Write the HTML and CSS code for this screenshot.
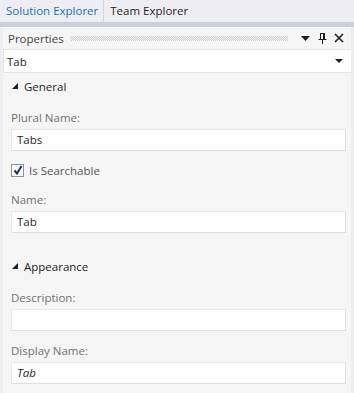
FILE: index.html
```html
<!DOCTYPE html>
<html>
<head>
    <meta charset="utf-8">
    <title>Properties</title>
    <link rel="stylesheet" href="styles.css">
</head>
<body>
    <div class="tabs">
        <div class="tab active">Solution Explorer</div>
        <div class="tab">Team Explorer</div>
    </div>
    <div class="band"></div>
    <div class="panel">
        <div class="header">
            <span class="title">Properties</span>
            <span class="grip"></span>
            <span class="tool">
                <svg width="9" height="5" viewBox="0 0 9 5"><path d="M0 0h9L4.5 5z" fill="#1e1e1e"/></svg>
            </span>
            <span class="tool">
                <svg width="9" height="11" viewBox="0 0 9 11"><path d="M2 0.5h5M2.5 0.5v6M6.5 0.5v6M5.5 0.5v6M0.5 6.5h8M4.5 6.5v4.5" stroke="#1e1e1e" fill="none"/></svg>
            </span>
            <span class="tool">
                <svg width="10" height="10" viewBox="0 0 10 10"><path d="M1 1l8 8M9 1l-8 8" stroke="#1e1e1e" stroke-width="1.6" fill="none"/></svg>
            </span>
        </div>
        <div class="combo">
            <span>Tab</span>
            <svg width="8" height="4" viewBox="0 0 8 4"><path d="M0 0h8L4 4z" fill="#1e1e1e"/></svg>
        </div>
        <div class="content">
            <div class="section">
                <svg class="caret" width="6" height="6" viewBox="0 0 6 6"><path d="M6 0v6H0z" fill="#1e1e1e"/></svg>
                <span>General</span>
            </div>
            <div class="label first">Plural Name:</div>
            <div class="input">Tabs</div>
            <label class="check">
                <span class="box">
                    <svg width="10" height="10" viewBox="0 0 10 10"><path d="M1.5 5.5l2.5 3 4.5-7.5" stroke="#1b2a6e" stroke-width="2" fill="none"/></svg>
                </span>
                Is Searchable
            </label>
            <div class="label after-check">Name:</div>
            <div class="input">Tab</div>
            <div class="section gap">
                <svg class="caret" width="6" height="6" viewBox="0 0 6 6"><path d="M6 0v6H0z" fill="#1e1e1e"/></svg>
                <span>Appearance</span>
            </div>
            <div class="label first">Description:</div>
            <div class="input"></div>
            <div class="label">Display Name:</div>
            <div class="input italic">Tab</div>
        </div>
    </div>
</body>
</html>
```
FILE: styles.css
```css
body {
    margin: 0;
    width: 354px;
    height: 393px;
    overflow: hidden;
    font-family: "Open Sans", "Noto Sans", sans-serif;
    font-size: 11.5px;
    color: #1e1e1e;
    background: #eeeef2;
}
.tabs {
    display: flex;
    height: 22px;
    background: #eeeef2;
}
.tab {
    padding: 0 5px 0 6px;
    line-height: 22px;
    color: #1e1e1e;
}
.tab.active {
    color: #1c6db6;
    border-right: 1px solid #d4d4dc;
}
.band {
    height: 5px;
    background: #ccced9;
}
.panel {
    height: 366px;
    margin-left: 3px;
    background: #f5f5f5;
    border-right: 3px solid #ededed;
}
.header {
    display: flex;
    align-items: center;
    height: 22px;
    padding: 0 4px 0 5px;
    color: #444;
}
.title {
    margin-right: 6px;
}
.grip {
    flex: 1;
    height: 5px;
    margin-right: 8px;
    background-image: conic-gradient(#cfcfd4 25%, transparent 0 50%, #cfcfd4 0 75%, transparent 0);
    background-size: 2px 2px;
}
.tool {
    display: flex;
    justify-content: center;
    align-items: center;
    width: 16px;
    height: 16px;
    margin-left: 1px;
}
.combo {
    display: flex;
    justify-content: space-between;
    align-items: center;
    height: 22px;
    padding: 0 8px 0 3px;
    background: #fff;
    border: 1px solid #e4e4e6;
    border-right: none;
}
.content {
    padding: 4px 5px 0 8px;
}
.section {
    display: flex;
    align-items: center;
    height: 18px;
    color: #1e1e1e;
}
.section.gap {
    margin-top: 24px;
}
.caret {
    margin: 0 6px 0 1px;
}
.label {
    height: 16px;
    line-height: 16px;
    margin-top: 12px;
    color: #717171;
}
.label.first {
    margin-top: 15px;
}
.label.after-check {
    margin-top: 14px;
}
.input {
    height: 20px;
    line-height: 20px;
    margin-top: 3px;
    padding: 0 5px;
    background: #fff;
    border: 1px solid #e9e9e9;
    border-bottom-color: #dedede;
    border-right-color: #dedede;
}
.italic {
    font-style: italic;
}
.check {
    display: flex;
    align-items: center;
    height: 16px;
    margin-top: 11px;
    color: #555;
}
.box {
    display: flex;
    justify-content: center;
    align-items: center;
    width: 11px;
    height: 11px;
    margin-right: 5px;
    background: #fff;
    border: 1px solid #8f8f9a;
}
```
